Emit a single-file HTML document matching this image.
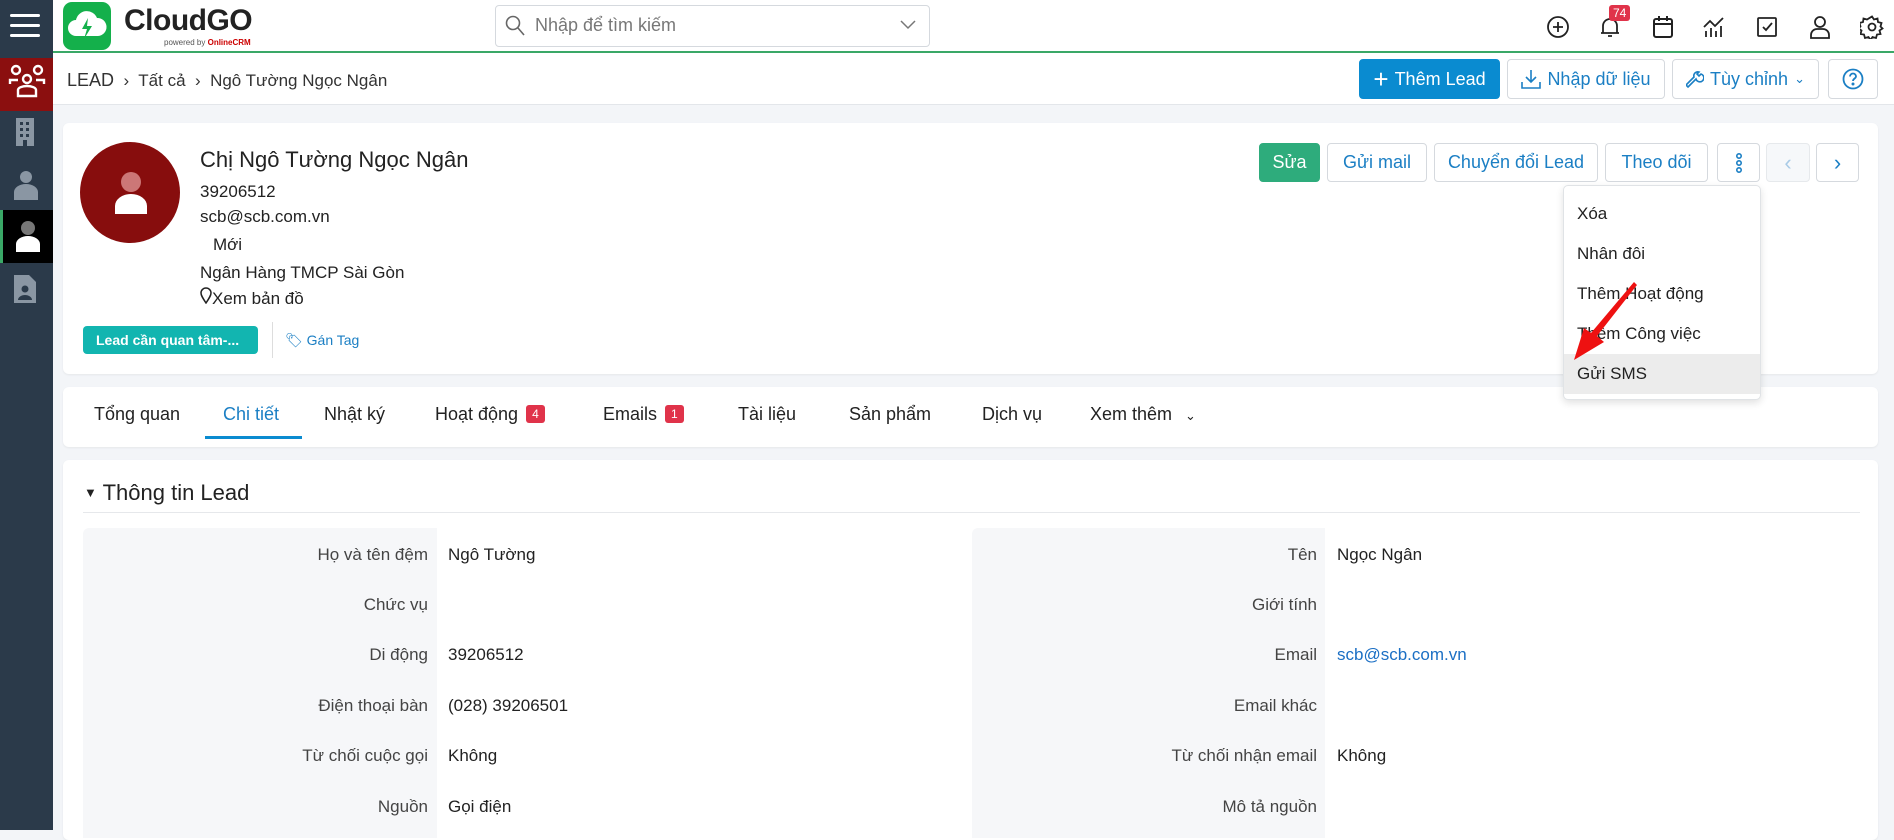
<!DOCTYPE html>
<html><head><meta charset="utf-8"><style>
*{box-sizing:border-box;margin:0;padding:0}
body{width:1894px;height:830px;overflow:hidden;background:#f3f5f8;font-family:"Liberation Sans",sans-serif;color:#222;position:relative;font-size:17px}
.a{position:absolute}
.side{left:0;top:0;width:53px;height:830px;background:#2b3a4a}
.top{left:53px;top:0;width:1841px;height:53px;background:#fff;border-bottom:2px solid #3aa867}
.bc{left:53px;top:53px;width:1841px;height:52px;background:#fff;border-bottom:1px solid #e3e6ea}
.btn{position:absolute;border:1px solid #d5d9de;border-radius:4px;background:#fff;color:#1b7fc4;font-size:17px;display:flex;align-items:center;justify-content:center;gap:6px}
.card{position:absolute;background:#fff;border-radius:6px;box-shadow:0 1px 2px rgba(0,0,0,.06)}
.tab{position:absolute;top:404px;font-size:18px;color:#222}
.badge{display:inline-block;background:#e0334a;color:#fff;font-size:12px;border-radius:3px;padding:2px 6px;margin-left:8px;vertical-align:2px}
.dd div{height:40px;line-height:40px;padding-left:13px;font-size:17px}
.lab{position:absolute;text-align:right;font-size:17px;color:#444}
.val{position:absolute;font-size:17px;color:#222}
</style></head><body>
<div class="a side"></div>
<div class="a" style="left:10px;top:14px;width:30px;height:24px">
<div style="height:3px;background:#fff;margin-bottom:7px;border-radius:2px"></div><div style="height:3px;background:#fff;margin-bottom:7px;border-radius:2px"></div><div style="height:3px;background:#fff;border-radius:2px"></div></div>
<div class="a" style="left:0;top:58px;width:53px;height:53px;background:#8b0f0f"></div>
<svg class="a" style="left:8px;top:62px" width="38" height="38" viewBox="0 0 38 38" fill="none" stroke="#fff" stroke-width="2.4"><circle cx="8" cy="8" r="4"/><circle cx="30" cy="8" r="4"/><circle cx="19" cy="17" r="4"/><path d="M2 22v-4h8M36 22v-4h-8M10 34v-6a9 4 0 0118 0v6z"/></svg>
<svg class="a" style="left:14px;top:118px" width="22" height="28" viewBox="0 0 22 28" fill="#8a96a3"><rect x="2" y="0" width="18" height="28"/><g fill="#2b3a4a"><rect x="6" y="4" width="3" height="3"/><rect x="12" y="4" width="3" height="3"/><rect x="6" y="10" width="3" height="3"/><rect x="12" y="10" width="3" height="3"/><rect x="6" y="16" width="3" height="3"/><rect x="12" y="16" width="3" height="3"/><rect x="9" y="22" width="4" height="6"/></g></svg>
<svg class="a" style="left:13px;top:170px" width="26" height="30" viewBox="0 0 26 30" fill="#8a96a3"><circle cx="13" cy="7" r="6"/><path d="M1 30v-8a12 8 0 0124 0v8z"/></svg>
<div class="a" style="left:0;top:210px;width:53px;height:53px;background:#000;border-left:3px solid #3aa867"></div>
<svg class="a" style="left:15px;top:220px" width="26" height="32" viewBox="0 0 26 32"><circle cx="13" cy="8" r="7" fill="#777"/><path d="M1 32v-8a12 8 0 0124 0v8z" fill="#fff"/></svg>
<svg class="a" style="left:14px;top:275px" width="22" height="28" viewBox="0 0 22 28" fill="#8a96a3"><path d="M0 0h15l7 7v21H0z"/><circle cx="11" cy="14" r="3.5" fill="#2b3a4a"/><path d="M4 25a7 5 0 0114 0z" fill="#2b3a4a"/></svg>

<div class="a top"></div>
<div class="a" style="left:63px;top:2px;width:48px;height:48px;background:#14b04b;border-radius:9px"></div>
<svg class="a" style="left:66px;top:10px" width="42" height="32" viewBox="0 0 42 32"><path d="M10 26a8 8 0 010-16 11 11 0 0121-2 8 8 0 011 18z" fill="#fff"/><path d="M22 8l-6 11h5l-3 10 8-13h-5z" fill="#14b04b"/></svg>
<div class="a" style="left:124px;top:4px;font-size:30px;font-weight:bold;color:#222;letter-spacing:-0.5px">CloudGO</div>
<div class="a" style="left:164px;top:38px;font-size:8px;color:#555">powered by <b style="color:#c00">OnlineCRM</b></div>
<div class="a" style="left:495px;top:5px;width:435px;height:42px;border:1px solid #d5d9de;border-radius:4px"></div>
<svg class="a" style="left:505px;top:15px" width="20" height="22" viewBox="0 0 20 22" fill="none" stroke="#666" stroke-width="1.6"><circle cx="8" cy="8" r="6.5"/><path d="M13 13l6 7"/></svg>
<div class="a" style="left:535px;top:15px;font-size:18px;color:#777">Nhập để tìm kiếm</div>
<svg class="a" style="left:900px;top:20px" width="16" height="10" viewBox="0 0 16 10" fill="none" stroke="#777" stroke-width="1.5"><path d="M1 1l7 7 7-7"/></svg>
<svg class="a" style="left:1546px;top:15px" width="24" height="24" viewBox="0 0 24 24" fill="none" stroke="#222" stroke-width="1.8"><circle cx="12" cy="12" r="10"/><path d="M12 7v10M7 12h10"/></svg>
<svg class="a" style="left:1598px;top:15px" width="24" height="24" viewBox="0 0 24 24" fill="none" stroke="#222" stroke-width="1.8"><path d="M5 18V11a7 7 0 0114 0v7zM3 18h18M10 21h4"/></svg>
<div class="a" style="left:1609px;top:5px;background:#e0334a;color:#fff;font-size:12px;padding:1px 4px;border-radius:3px">74</div>
<svg class="a" style="left:1651px;top:15px" width="24" height="24" viewBox="0 0 24 24" fill="none" stroke="#222" stroke-width="2"><rect x="3" y="4" width="18" height="18" rx="2"/><path d="M3 9h18M8 1v5M16 1v5"/></svg>
<svg class="a" style="left:1702px;top:15px" width="24" height="24" viewBox="0 0 24 24" fill="none" stroke="#222" stroke-width="1.8"><path d="M2 12l6-6 5 5 8-8M4 22v-6M9 22v-9M14 22v-6M19 22v-11"/></svg>
<svg class="a" style="left:1755px;top:15px" width="24" height="24" viewBox="0 0 24 24" fill="none" stroke="#222" stroke-width="1.8"><rect x="3" y="3" width="18" height="18" rx="1"/><path d="M8 12l3 3 6-7"/></svg>
<svg class="a" style="left:1808px;top:15px" width="24" height="24" viewBox="0 0 24 24" fill="none" stroke="#222" stroke-width="1.8"><circle cx="12" cy="7" r="5"/><path d="M3 23v-3a6 6 0 016-6h6a6 6 0 016 6v3z"/></svg>
<svg class="a" style="left:1860px;top:15px" width="24" height="24" viewBox="0 0 24 24" fill="none" stroke="#222" stroke-width="1.8"><circle cx="12" cy="12" r="3.5"/><path d="M12 1.5l2 3 3.5-1 .5 3.5 3.5 1-1 3.5 2 2-3 2 1 3.5-3.5.5-1 3.5-3.5-1-2 3-2-3-3.5 1-1-3.5-3.5-.5 1-3.5-3-2 2-2-1-3.5 3.5-1 .5-3.5 3.5 1z"/></svg>

<div class="a bc"></div>
<div class="a" style="left:67px;top:70px;font-size:17px;color:#333"><span style="font-size:18px">LEAD</span> &nbsp;›&nbsp; Tất cả &nbsp;›&nbsp; Ngô Tường Ngọc Ngân</div>
<div class="btn" style="left:1359px;top:59px;width:141px;height:40px;background:#0a8bd0;border-color:#0a8bd0;color:#fff;font-size:18px"><span style="font-size:26px;font-weight:300">+</span> Thêm Lead</div>
<div class="btn" style="left:1507px;top:59px;width:158px;height:40px;font-size:18px"><svg width="20" height="20" viewBox="0 0 20 20" fill="none" stroke="#1b7fc4" stroke-width="1.6"><path d="M10 1v11M5 8l5 5 5-5M1 13v6h18v-6"/></svg>Nhập dữ liệu</div>
<div class="btn" style="left:1672px;top:59px;width:147px;height:40px;font-size:18px"><svg width="18" height="20" viewBox="0 0 18 20" fill="none" stroke="#1b7fc4" stroke-width="1.6"><path d="M2 18l8-8a4 4 0 105-5l-2 2-2-2 2-2a4 4 0 00-5 5l-8 8z"/></svg>Tùy chỉnh <span style="font-size:13px">⌄</span></div>
<div class="btn" style="left:1828px;top:59px;width:50px;height:40px"><svg width="22" height="22" viewBox="0 0 22 22" fill="none" stroke="#1b7fc4" stroke-width="1.8"><circle cx="11" cy="11" r="9.5"/><path d="M8 8.5a3 3 0 116 0c0 2-3 2-3 4.5"/><circle cx="11" cy="16" r=".6" fill="#1b7fc4"/></svg></div>

<div class="card" style="left:63px;top:123px;width:1815px;height:251px"></div>
<div class="a" style="left:80px;top:142px;width:100px;height:101px;border-radius:50%;background:#870d0d"></div>
<svg class="a" style="left:113px;top:172px" width="36" height="42" viewBox="0 0 36 42"><circle cx="18" cy="10" r="10" fill="#c77"/><path d="M2 42v-8a16 12 0 0132 0v8z" fill="#fff"/></svg>
<div class="a" style="left:200px;top:147px;font-size:22px;color:#222">Chị Ngô Tường Ngọc Ngân</div>
<div class="a" style="left:200px;top:182px">39206512</div>
<div class="a" style="left:200px;top:207px">scb@scb.com.vn</div>
<div class="a" style="left:213px;top:235px">Mới</div>
<div class="a" style="left:200px;top:263px">Ngân Hàng TMCP Sài Gòn</div>
<div class="a" style="left:200px;top:287px"><svg width="12" height="17" viewBox="0 0 12 17" fill="none" stroke="#222" stroke-width="1.5"><path d="M6 16C2 10 1 8 1 6a5 5 0 0110 0c0 2-1 4-5 10z"/></svg>Xem bản đồ</div>
<div class="a" style="left:83px;top:326px;width:175px;height:28px;background:#12b5b0;border-radius:4px;color:#fff;font-size:14px;font-weight:bold;line-height:28px;padding-left:13px">Lead cần quan tâm-...</div>
<div class="a" style="left:272px;top:322px;width:1px;height:36px;background:#ddd"></div>
<div class="a" style="left:285px;top:332px;font-size:14px;color:#1b7fc4">🏷︎ Gán Tag</div>

<div class="btn" style="left:1259px;top:143px;width:61px;height:39px;background:#2eac7c;border-color:#2eac7c;color:#fff;font-size:18px">Sửa</div>
<div class="btn" style="left:1327px;top:143px;width:100px;height:39px;font-size:18px">Gửi mail</div>
<div class="btn" style="left:1434px;top:143px;width:164px;height:39px;font-size:18px">Chuyển đổi Lead</div>
<div class="btn" style="left:1605px;top:143px;width:103px;height:39px;font-size:18px">Theo dõi</div>
<div class="btn" style="left:1717px;top:143px;width:43px;height:39px"><svg width="8" height="20" viewBox="0 0 8 20" fill="none" stroke="#1b7fc4" stroke-width="1.6"><circle cx="4" cy="3" r="2.2"/><circle cx="4" cy="10" r="2.2"/><circle cx="4" cy="17" r="2.2"/></svg></div>
<div class="btn" style="left:1766px;top:143px;width:44px;height:39px;background:#f6f8fa;border-color:#e6e9ec;color:#a9cbe6;font-size:22px">‹</div>
<div class="btn" style="left:1816px;top:143px;width:43px;height:39px;font-size:22px">›</div>

<div class="card" style="left:63px;top:387px;width:1815px;height:60px"></div>
<div class="tab" style="left:94px">Tổng quan</div>
<div class="tab" style="left:223px;color:#1b7fc4">Chi tiết</div>
<div class="a" style="left:205px;top:436px;width:97px;height:3px;background:#0a8bd0"></div>
<div class="tab" style="left:324px">Nhật ký</div>
<div class="tab" style="left:435px">Hoạt động<span class="badge">4</span></div>
<div class="tab" style="left:603px">Emails<span class="badge">1</span></div>
<div class="tab" style="left:738px">Tài liệu</div>
<div class="tab" style="left:849px">Sản phẩm</div>
<div class="tab" style="left:982px">Dịch vụ</div>
<div class="tab" style="left:1090px">Xem thêm <span style="font-size:13px;margin-left:8px">⌄</span></div>

<div class="card" style="left:63px;top:460px;width:1815px;height:380px"></div>
<div class="a" style="left:84px;top:480px;font-size:22px;color:#222"><span style="font-size:13px;vertical-align:3px">▼</span> Thông tin Lead</div>
<div class="a" style="left:83px;top:512px;width:1777px;height:1px;background:#e6e8eb"></div>
<div class="a" style="left:83px;top:528px;width:354px;height:310px;background:#f6f7f9;border-radius:6px 0 0 0"></div>
<div class="a" style="left:972px;top:528px;width:353px;height:310px;background:#f6f7f9;border-radius:6px 0 0 0"></div>
<div class="lab" style="left:83px;width:345px;top:545px">Họ và tên đệm</div><div class="val" style="left:448px;top:545px">Ngô Tường</div>
<div class="lab" style="left:83px;width:345px;top:595px">Chức vụ</div>
<div class="lab" style="left:83px;width:345px;top:645px">Di động</div><div class="val" style="left:448px;top:645px">39206512</div>
<div class="lab" style="left:83px;width:345px;top:696px">Điện thoại bàn</div><div class="val" style="left:448px;top:696px">(028) 39206501</div>
<div class="lab" style="left:83px;width:345px;top:746px">Từ chối cuộc gọi</div><div class="val" style="left:448px;top:746px">Không</div>
<div class="lab" style="left:83px;width:345px;top:797px">Nguồn</div><div class="val" style="left:448px;top:797px">Gọi điện</div>
<div class="lab" style="left:972px;width:345px;top:545px">Tên</div><div class="val" style="left:1337px;top:545px">Ngọc Ngân</div>
<div class="lab" style="left:972px;width:345px;top:595px">Giới tính</div>
<div class="lab" style="left:972px;width:345px;top:645px">Email</div><div class="val" style="left:1337px;top:645px;color:#1b6fc4">scb@scb.com.vn</div>
<div class="lab" style="left:972px;width:345px;top:696px">Email khác</div>
<div class="lab" style="left:972px;width:345px;top:746px">Từ chối nhận email</div><div class="val" style="left:1337px;top:746px">Không</div>
<div class="lab" style="left:972px;width:345px;top:797px">Mô tả nguồn</div>

<div class="a dd" style="left:1563px;top:185px;width:198px;height:215px;background:#fff;border:1px solid #e0e3e6;border-radius:5px;box-shadow:0 3px 8px rgba(0,0,0,.12);padding-top:8px">
<div>Xóa</div><div>Nhân đôi</div><div>Thêm Hoạt động</div><div>Thêm Công việc</div><div style="background:#ececec">Gửi SMS</div></div>
<svg class="a" style="left:1566px;top:282px" width="72" height="82" viewBox="0 0 72 82"><path d="M68 0L71 3 31 54 38 60 8 78 18 46 25 51z" fill="#ee1111"/></svg>
</body></html>
